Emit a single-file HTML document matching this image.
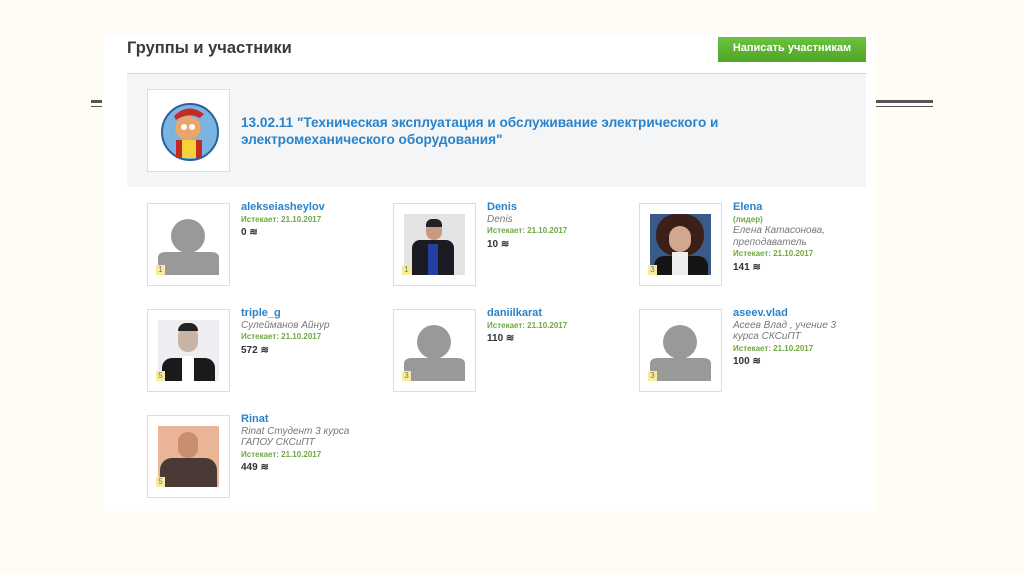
<!DOCTYPE html>
<html><head><meta charset="utf-8"><style>
*{margin:0;padding:0;box-sizing:border-box}
body{width:1024px;height:574px;background:#fffdf3;position:relative;overflow:hidden;font-family:"Liberation Sans",Arial,sans-serif}
.abs{position:absolute}
.panel{left:103px;top:34px;width:773px;height:477px;background:#fff}
.title{left:127px;top:39px;font-size:16.5px;font-weight:bold;color:#3a3a3a}
.btn{left:718px;top:37px;width:148px;height:25px;background:linear-gradient(#6cc140,#4fa524);color:#fff;font-weight:bold;font-size:11px;text-align:center;line-height:23px}
.hr{left:127px;top:73px;width:739px;height:1px;background:#d4d4d4}
.gray{left:127px;top:74px;width:739px;height:113px;background:#f4f5f7}
.logo{left:147px;top:89px;width:83px;height:83px;background:#fff;border:1px solid #ddd}
.gt{left:241px;top:114px;font-size:13.6px;font-weight:bold;color:#2a83c9;line-height:17px}
.box{width:83px;height:83px;border:1px solid #ddd;background:#fff}
.img{position:absolute;left:10px;top:10px;width:61px;height:61px;overflow:hidden}
.badge{position:absolute;left:8px;top:61px;width:9px;height:10px;background:#f7ec9a;font-size:8px;color:#777;text-align:center;line-height:10px}
.info{font-size:10px;line-height:11.6px;color:#777}
.info .n{font-size:11px;font-weight:bold;color:#2a83c9}
.info .s{font-style:italic}
.info .e{font-size:8px;font-weight:bold;color:#6ea843}
.info .c{font-weight:bold;color:#333;margin-top:2px}
.ln{background:#555}
</style></head><body>
<div class="abs ln" style="left:91px;top:100px;width:11px;height:3px"></div>
<div class="abs ln" style="left:91px;top:106px;width:11px;height:1px"></div>
<div class="abs ln" style="left:876px;top:100px;width:57px;height:3px"></div>
<div class="abs ln" style="left:876px;top:106px;width:57px;height:1px"></div>
<div class="abs panel"></div>
<div class="abs title">Группы и участники</div>
<div class="abs btn">Написать участникам</div>
<div class="abs hr"></div>
<div class="abs gray"></div>
<div class="abs logo"><svg width="83" height="83" viewBox="0 0 83 83"><circle cx="42" cy="42" r="28" fill="#7ab4e0" stroke="#2c5f9e" stroke-width="2"/><ellipse cx="40" cy="38" rx="13" ry="12" fill="#e8a66a"/><path d="M26 26 Q40 12 56 24 L52 28 Q40 22 28 30Z" fill="#c62a24"/><rect x="28" y="50" width="26" height="18" fill="#c62a24"/><rect x="34" y="50" width="14" height="18" fill="#f3d23b"/><circle cx="36" cy="37" r="3" fill="#fff"/><circle cx="44" cy="37" r="3" fill="#fff"/></svg></div>
<div class="abs gt">13.02.11 "Техническая эксплуатация и обслуживание электрического и<br>электромеханического оборудования"</div>

<div class="abs box" style="left:147px;top:203px"><div class="img"><svg width="61" height="61"><circle cx="30" cy="22" r="17" fill="#999"/><path d="M0 61V44Q0 38 8 38H53Q61 38 61 44V61Z" fill="#999"/></svg></div><div class="badge">1</div></div>
<div class="abs info" style="left:241px;top:202px"><div class="n">alekseiasheylov</div><div class="e">Истекает: 21.10.2017</div><div class="c">0 ≋</div></div>

<div class="abs box" style="left:393px;top:203px"><div class="img" style="background:#e4e4e4"><div class="abs" style="left:22px;top:8px;width:16px;height:18px;border-radius:8px;background:#c89a80"></div><div class="abs" style="left:22px;top:5px;width:16px;height:8px;border-radius:6px 6px 0 0;background:#222"></div><div class="abs" style="left:8px;top:26px;width:42px;height:35px;background:#1b1b24;border-radius:8px 8px 0 0"></div><div class="abs" style="left:24px;top:30px;width:10px;height:31px;background:#2340a0"></div></div><div class="badge">1</div></div>
<div class="abs info" style="left:487px;top:202px"><div class="n">Denis</div><div class="s">Denis</div><div class="e">Истекает: 21.10.2017</div><div class="c">10 ≋</div></div>

<div class="abs box" style="left:639px;top:203px"><div class="img" style="background:#3a5a8a"><div class="abs" style="left:6px;top:0;width:48px;height:42px;border-radius:20px;background:#3a2016"></div><div class="abs" style="left:19px;top:12px;width:22px;height:26px;border-radius:11px;background:#d0a890"></div><div class="abs" style="left:4px;top:42px;width:54px;height:19px;background:#151515;border-radius:10px 10px 0 0"></div><div class="abs" style="left:22px;top:38px;width:16px;height:23px;background:#eee"></div></div><div class="badge">3</div></div>
<div class="abs info" style="left:733px;top:202px"><div class="n">Elena</div><div class="e">(лидер)</div><div class="s">Елена Катасонова,<br>преподаватель</div><div class="e">Истекает: 21.10.2017</div><div class="c">141 ≋</div></div>

<div class="abs box" style="left:147px;top:309px"><div class="img" style="background:#eeeef2"><div class="abs" style="left:20px;top:6px;width:20px;height:26px;border-radius:10px;background:#c9b2a6"></div><div class="abs" style="left:20px;top:3px;width:20px;height:8px;border-radius:8px 8px 0 0;background:#222"></div><div class="abs" style="left:4px;top:38px;width:53px;height:23px;background:#1a1a1a;border-radius:10px 10px 0 0"></div><div class="abs" style="left:24px;top:36px;width:12px;height:25px;background:#fff"></div></div><div class="badge">5</div></div>
<div class="abs info" style="left:241px;top:308px"><div class="n">triple_g</div><div class="s">Сулейманов Айнур</div><div class="e">Истекает: 21.10.2017</div><div class="c">572 ≋</div></div>

<div class="abs box" style="left:393px;top:309px"><div class="img"><svg width="61" height="61"><circle cx="30" cy="22" r="17" fill="#999"/><path d="M0 61V44Q0 38 8 38H53Q61 38 61 44V61Z" fill="#999"/></svg></div><div class="badge">3</div></div>
<div class="abs info" style="left:487px;top:308px"><div class="n">daniilkarat</div><div class="e">Истекает: 21.10.2017</div><div class="c">110 ≋</div></div>

<div class="abs box" style="left:639px;top:309px"><div class="img"><svg width="61" height="61"><circle cx="30" cy="22" r="17" fill="#999"/><path d="M0 61V44Q0 38 8 38H53Q61 38 61 44V61Z" fill="#999"/></svg></div><div class="badge">3</div></div>
<div class="abs info" style="left:733px;top:308px"><div class="n">aseev.vlad</div><div class="s">Асеев Влад , учение 3<br>курса СКСиПТ</div><div class="e">Истекает: 21.10.2017</div><div class="c">100 ≋</div></div>

<div class="abs box" style="left:147px;top:415px"><div class="img" style="background:#e9b596"><div class="abs" style="left:20px;top:6px;width:20px;height:26px;border-radius:10px;background:#c98e6e"></div><div class="abs" style="left:2px;top:32px;width:57px;height:29px;background:#4a3a36;border-radius:12px 12px 0 0"></div></div><div class="badge">5</div></div>
<div class="abs info" style="left:241px;top:414px"><div class="n">Rinat</div><div class="s">Rinat Студент 3 курса<br>ГАПОУ СКСиПТ</div><div class="e">Истекает: 21.10.2017</div><div class="c">449 ≋</div></div>
</body></html>
